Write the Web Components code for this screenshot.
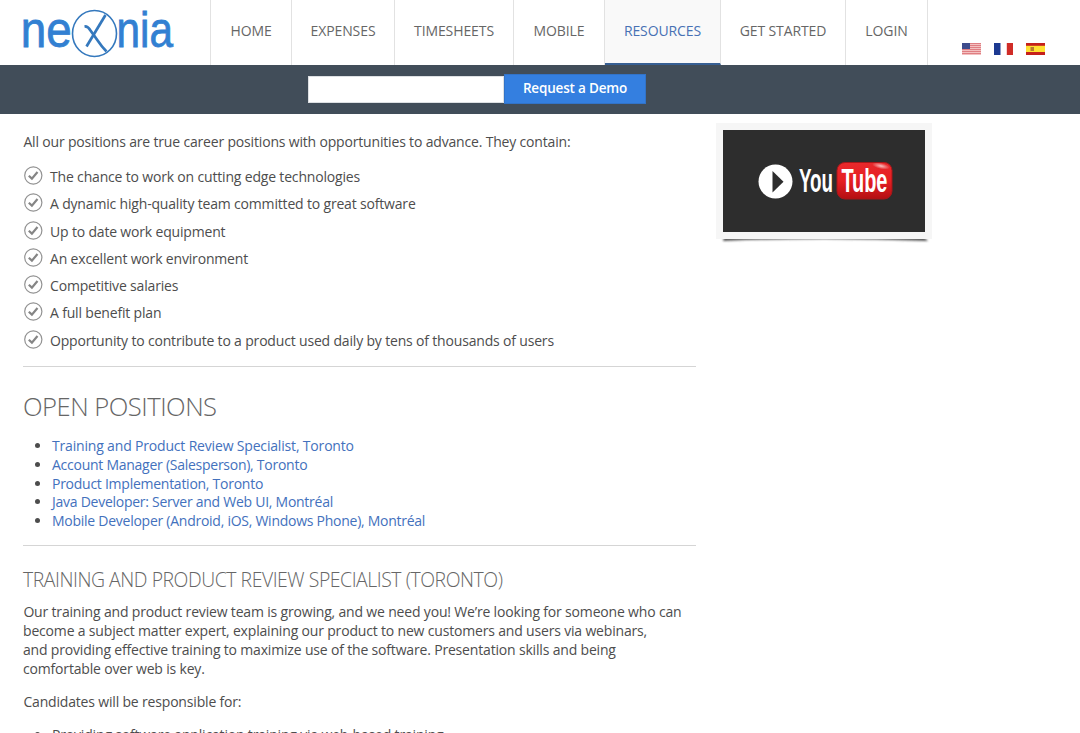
<!DOCTYPE html>
<html lang="en">
<head>
<meta charset="utf-8">
<title>Nexnia - Careers</title>
<style>
body {
	margin: 0;
	height: 733px;
	overflow: hidden;
	background: #fff;
	color: #4d4d4d;
	font: 14px/19px "Open Sans", "Noto Sans", sans-serif;
}
</style>
</head>
<body>
<careers-page></careers-page>

<script>
class NexniaLogo extends HTMLElement {
	constructor() {
		super();
		this.attachShadow({mode: 'open'}).innerHTML = `
<style>
:host {
	display: block;
	width: 210px;
	height: 64px;
}
svg {
	display: block;
}
text {
	font: 49.5px "Liberation Sans", sans-serif;
	fill: #3280d2;
	stroke: #3280d2;
	stroke-width: 0.8px;
}
</style>
<svg width="210" height="64" viewBox="0 0 210 64">
	<text transform="translate(20.800 47) scale(0.925 1)">ne</text>
	<g fill="none" stroke="#3478bd">
		<ellipse cx="94.5" cy="33.5" rx="22" ry="23" stroke-width="1.6" />
		<path d="M84.500 26.500c3-.3 4.500 1.500 6 4l7.500 10.500c2 3 5 7 8.500 10.500" stroke-width="2.700" />
		<path d="M86.500 46.500L105.500 15" stroke-width="2.700" />
	</g>
	<text transform="translate(116.500 47) scale(0.855 1)">nia</text>
</svg>`;
	}
}

class NavItem extends HTMLElement {
	constructor() {
		super();
		this.attachShadow({mode: 'open'}).innerHTML = `
<style>
:host {
	display: flex;
	box-sizing: border-box;
	height: 65px;
	padding-bottom: 4px;
	border-right: 1px solid #e2e2e2;
	align-items: center;
	justify-content: center;
	color: #666;
	letter-spacing: -0.1px;
}
:host([active]) {
	padding-bottom: 2px;
	border-bottom: 2px solid #375f93;
	background: #f9f9f9;
	color: #4871b4;
}
</style>
<slot></slot>`;
	}
}

class LanguageFlags extends HTMLElement {
	constructor() {
		super();
		this.attachShadow({mode: 'open'}).innerHTML = `
<style>
:host {
	display: flex;
	gap: 13px;
	padding: 43px 0 0 34px;
}
svg {
	display: block;
}
</style>
<svg width="19" height="12" viewBox="0 0 19 12">
	<rect width="19" height="12" fill="#f3c0c0" />
	<path d="M0 .5h19M0 2.500h19M0 4.500h19M0 6.500h19M0 8.500h19M0 10.500h19" stroke="#df7e82" />
	<rect width="8" height="6" fill="#3e4c8c" />
</svg>
<svg width="19" height="12" viewBox="0 0 19 12">
	<rect width="19" height="12" fill="#fff" />
	<rect width="6.500" height="12" fill="#1c3991" />
	<rect x="12.800" width="6.200" height="12" fill="#d02c27" />
</svg>
<svg width="19" height="12" viewBox="0 0 19 12">
	<rect width="19" height="12" fill="#c5201c" />
	<rect y="2.800" width="19" height="6.200" fill="#ffe032" />
	<rect x="4.500" y="4" width="3.500" height="4" fill="#b77a2e" />
</svg>`;
	}
}

class SiteHeader extends HTMLElement {
	constructor() {
		super();
		this.attachShadow({mode: 'open'}).innerHTML = `
<style>
:host {
	display: flex;
	height: 65px;
}
nav {
	display: grid;
	grid-template-columns: 81px 103px 119px 91px 116px 125px 82px;
	border-left: 1px solid #e2e2e2;
}
</style>
<nexnia-logo></nexnia-logo>
<nav>
	<nav-item>HOME</nav-item>
	<nav-item>EXPENSES</nav-item>
	<nav-item>TIMESHEETS</nav-item>
	<nav-item>MOBILE</nav-item>
	<nav-item active>RESOURCES</nav-item>
	<nav-item>GET STARTED</nav-item>
	<nav-item>LOGIN</nav-item>
</nav>
<language-flags></language-flags>`;
	}
}

class DemoBar extends HTMLElement {
	constructor() {
		super();
		this.attachShadow({mode: 'open'}).innerHTML = `
<style>
:host {
	display: flex;
	box-sizing: border-box;
	height: 49px;
	padding: 9px 0 0 308px;
	background: #414d59;
}
input {
	box-sizing: border-box;
	width: 196px;
	height: 27px;
	margin: 2px 0 0;
	padding: 0 8px;
	border: 1px solid #dde0e3;
	background: #fff;
	font: inherit;
}
button {
	width: 142px;
	height: 30px;
	padding: 0 0 2px;
	border: 1px solid #3273c8;
	background: #347fe0;
	color: #fff;
	font: 600 13.5px "Open Sans", sans-serif;
	letter-spacing: -0.18px;
}
</style>
<input type="text"><button>Request a Demo</button>`;
	}
}

class CheckItem extends HTMLElement {
	constructor() {
		super();
		this.attachShadow({mode: 'open'}).innerHTML = `
<style>
:host {
	display: flex;
	height: 27.3px;
	gap: 7px;
}
svg {
	flex: none;
}
span {
	padding-top: 1px;
}
</style>
<svg width="20" height="20" viewBox="0 0 20 20" fill="none">
	<circle cx="10.300" cy="9.500" r="8.600" stroke="#929292" stroke-width="1.200" />
	<path d="M5.800 9.800l3.100 2.800L14.500 6" stroke="#858585" stroke-width="2.200" />
</svg>
<span><slot></slot></span>`;
	}
}

class JobLinks extends HTMLElement {
	constructor() {
		super();
		this.attachShadow({mode: 'open'}).innerHTML = `
<style>
:host {
	display: block;
}
ul {
	margin: 0;
	padding: 0 0 0 29px;
	line-height: 18.8px;
}
::slotted(li) {
	color: var(--item-color, inherit);
}
::slotted(li)::marker {
	color: #4d4d4d;
}
</style>
<ul><slot></slot></ul>`;
	}
}

class YoutubeCard extends HTMLElement {
	constructor() {
		super();
		this.attachShadow({mode: 'open'}).innerHTML = `
<style>
:host {
	display: block;
	width: 216px;
	height: 122px;
}
svg {
	display: block;
}
text {
	font: bold 33px "Liberation Sans", sans-serif;
	fill: #fff;
}
</style>
<svg width="216" height="122" viewBox="0 0 216 122">
	<defs>
		<linearGradient id="red" x2="0" y2="1">
			<stop stop-color="#e8292b" offset="0" />
			<stop stop-color="#e61f23" offset="0.500" />
			<stop stop-color="#b30f12" offset="1" />
		</linearGradient>
		<radialGradient id="gloss">
			<stop stop-color="#fff" stop-opacity="0.700" offset="0" />
			<stop stop-color="#fff" stop-opacity="0" offset="1" />
		</radialGradient>
		<filter id="soft" x="-10%" y="-100%" width="120%" height="300%">
			<feGaussianBlur stdDeviation="1.300" />
		</filter>
	</defs>
	<path d="M8 114H208L212 118Q108 114 7 118z" fill="#555" filter="url(#soft)" />
	<rect width="216" height="116" fill="#f6f6f6" />
	<rect x="7" y="7" width="202" height="102" fill="#2d2d2d" />
	<circle cx="59.500" cy="58.500" r="17" fill="#fff" />
	<path d="M56.500 48v21.500l11-10.800z" fill="#2d2d2d" />
	<text transform="translate(83 69) scale(0.570 1)">You</text>
	<rect x="121" y="39.500" width="55" height="36.500" rx="8" fill="url(#red)" stroke="#a61619" />
	<ellipse cx="165" cy="43" rx="9" ry="3" fill="url(#gloss)" transform="rotate(12 165 43)" />
	<text transform="translate(125.500 69) scale(0.605 1)">Tube</text>
</svg>`;
	}
}

class CareersPage extends HTMLElement {
	constructor() {
		super();
		this.attachShadow({mode: 'open'}).innerHTML = `
<style>
:host {
	display: block;
}
.columns {
	display: grid;
	grid-template-columns: 673px 216px;
	gap: 20px;
	padding: 9px 0 0 23px;
	letter-spacing: -0.175px;
}
main {
	padding-top: 10px;
}
p {
	margin: 0;
	line-height: 18.9px;
	text-indent: 0.4px;
	white-space: nowrap;
}
.checks {
	margin: 14px 0 9px;
}
hr {
	height: 1px;
	margin: 0;
	border: 0;
	background: #d5d5d5;
}
h1, h2 {
	margin: 0;
	color: #666;
	font-weight: 300;
	white-space: nowrap;
}
h1 {
	margin-top: 23px;
	font-size: 25.6px;
	line-height: 34px;
	letter-spacing: -0.5px;
}
h2 {
	margin-top: 21px;
	font-size: 19.4px;
	line-height: 26px;
	letter-spacing: -0.45px;
}
.open {
	--item-color: #4371bd;
	margin: 13px 0 14px;
}
.tight {
	letter-spacing: -0.26px;
}
.intro {
	margin-top: 10px;
}
.intro + p {
	margin-top: 14px;
}
.duties {
	margin-top: 14px;
}
</style>
<site-header></site-header>
<demo-bar></demo-bar>
<div class="columns">
	<main>
		<p>All our positions are true career positions with opportunities to advance. They contain:</p>
		<div class="checks">
			<check-item>The chance to work on cutting edge technologies</check-item>
			<check-item>A dynamic high-quality team committed to great software</check-item>
			<check-item>Up to date work equipment</check-item>
			<check-item>An excellent work environment</check-item>
			<check-item>Competitive salaries</check-item>
			<check-item>A full benefit plan</check-item>
			<check-item>Opportunity to contribute to a product used daily by tens of thousands of users</check-item>
		</div>
		<hr>
		<h1>OPEN POSITIONS</h1>
		<job-links class="open">
			<li>Training and Product Review Specialist, Toronto</li>
			<li class="tight">Account Manager (Salesperson), Toronto</li>
			<li class="tight">Product Implementation, Toronto</li>
			<li class="tight">Java Developer: Server and Web UI, Montréal</li>
			<li class="tight">Mobile Developer (Android, iOS, Windows Phone), Montréal</li>
		</job-links>
		<hr>
		<h2>TRAINING AND PRODUCT REVIEW SPECIALIST (TORONTO)</h2>
		<p class="intro">Our training and product review team is growing, and we need you! We’re looking for someone who can<br>become a subject matter expert, explaining our product to new customers and users via webinars,<br>and providing effective training to maximize use of the software. Presentation skills and being<br>comfortable over web is key.</p>
		<p>Candidates will be responsible for:</p>
		<job-links class="duties">
			<li>Providing software application training via web-based training</li>
		</job-links>
	</main>
	<youtube-card></youtube-card>
</div>`;
	}
}

window.customElements.define('nexnia-logo', NexniaLogo);
window.customElements.define('nav-item', NavItem);
window.customElements.define('language-flags', LanguageFlags);
window.customElements.define('site-header', SiteHeader);
window.customElements.define('demo-bar', DemoBar);
window.customElements.define('check-item', CheckItem);
window.customElements.define('job-links', JobLinks);
window.customElements.define('youtube-card', YoutubeCard);
window.customElements.define('careers-page', CareersPage);
</script>
</body>
</html>
